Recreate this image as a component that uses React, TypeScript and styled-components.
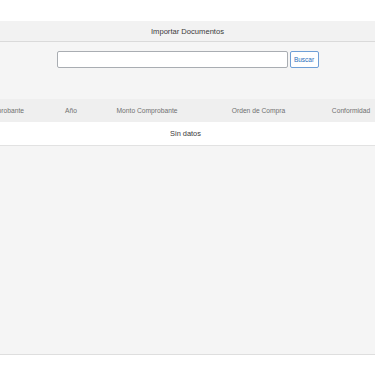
import React from "react";
import styled, { createGlobalStyle } from "styled-components";

const GlobalStyle = createGlobalStyle`
  html, body {
    margin: 0;
    padding: 0;
    background: #ffffff;
    font-family: "Liberation Sans", Arial, sans-serif;
  }
  * { box-sizing: border-box; }
`;

const Page = styled.div`
  width: 375px;
  padding-top: 21px;
  background: #ffffff;
`;

const TitleBar = styled.div`
  height: 21px;
  background: #f2f2f2;
  border-bottom: 1px solid #dadada;
  display: flex;
  align-items: center;
  justify-content: center;
  font-size: 7.6px;
  color: #3a3a3a;
`;

const Content = styled.div`
  height: 313px;
  background: #f5f5f5;
  border-bottom: 1px solid #dedede;
  padding-top: 9px;
  overflow: hidden;
`;

const SearchRow = styled.div`
  display: flex;
  justify-content: center;
  gap: 2px;
  height: 17px;
`;

const SearchInput = styled.input`
  width: 231px;
  height: 17px;
  border: 1px solid #a9adb2;
  border-radius: 2px;
  background: #ffffff;
  padding: 0 4px;
  outline: none;
`;

const SearchButton = styled.button`
  width: 29px;
  height: 17px;
  padding: 0;
  border: 1px solid #6f9fd6;
  border-radius: 2px;
  background: #ffffff;
  color: #2a6ebb;
  font-family: "Liberation Sans", Arial, sans-serif;
  font-size: 6.5px;
  cursor: pointer;
`;

const TableViewport = styled.div`
  margin-top: 31px;
  width: 375px;
  overflow: hidden;
`;

const Table = styled.div`
  margin-left: -49px;
  width: 428px;
`;

const columns = "91px 58px 94px 129px 56px";

const HeaderRow = styled.div`
  display: grid;
  grid-template-columns: ${columns};
  height: 23px;
  background: #efefef;
  align-items: center;
`;

const HeaderCell = styled.div`
  text-align: center;
  font-size: 6.7px;
  color: #707070;
  white-space: nowrap;
`;

const EmptyRow = styled.div`
  height: 24px;
  background: #ffffff;
  border-bottom: 1px solid #e2e2e2;
  display: flex;
  align-items: center;
  padding-left: 49px;
`;

const EmptyText = styled.span`
  width: 371px;
  text-align: center;
  font-size: 7.4px;
  color: #3a3a3a;
`;

const headers = ["Nro. Comprobante", "Año", "Monto Comprobante", "Orden de Compra", "Conformidad"];

export default function App() {
  return (
    <>
      <GlobalStyle />
      <Page>
        <TitleBar>Importar Documentos</TitleBar>
        <Content>
          <SearchRow>
            <SearchInput type="text" />
            <SearchButton type="button">Buscar</SearchButton>
          </SearchRow>
          <TableViewport>
            <Table>
              <HeaderRow>
                {headers.map((h) => (
                  <HeaderCell key={h}>{h}</HeaderCell>
                ))}
              </HeaderRow>
              <EmptyRow>
                <EmptyText>Sin datos</EmptyText>
              </EmptyRow>
            </Table>
          </TableViewport>
        </Content>
      </Page>
    </>
  );
}
